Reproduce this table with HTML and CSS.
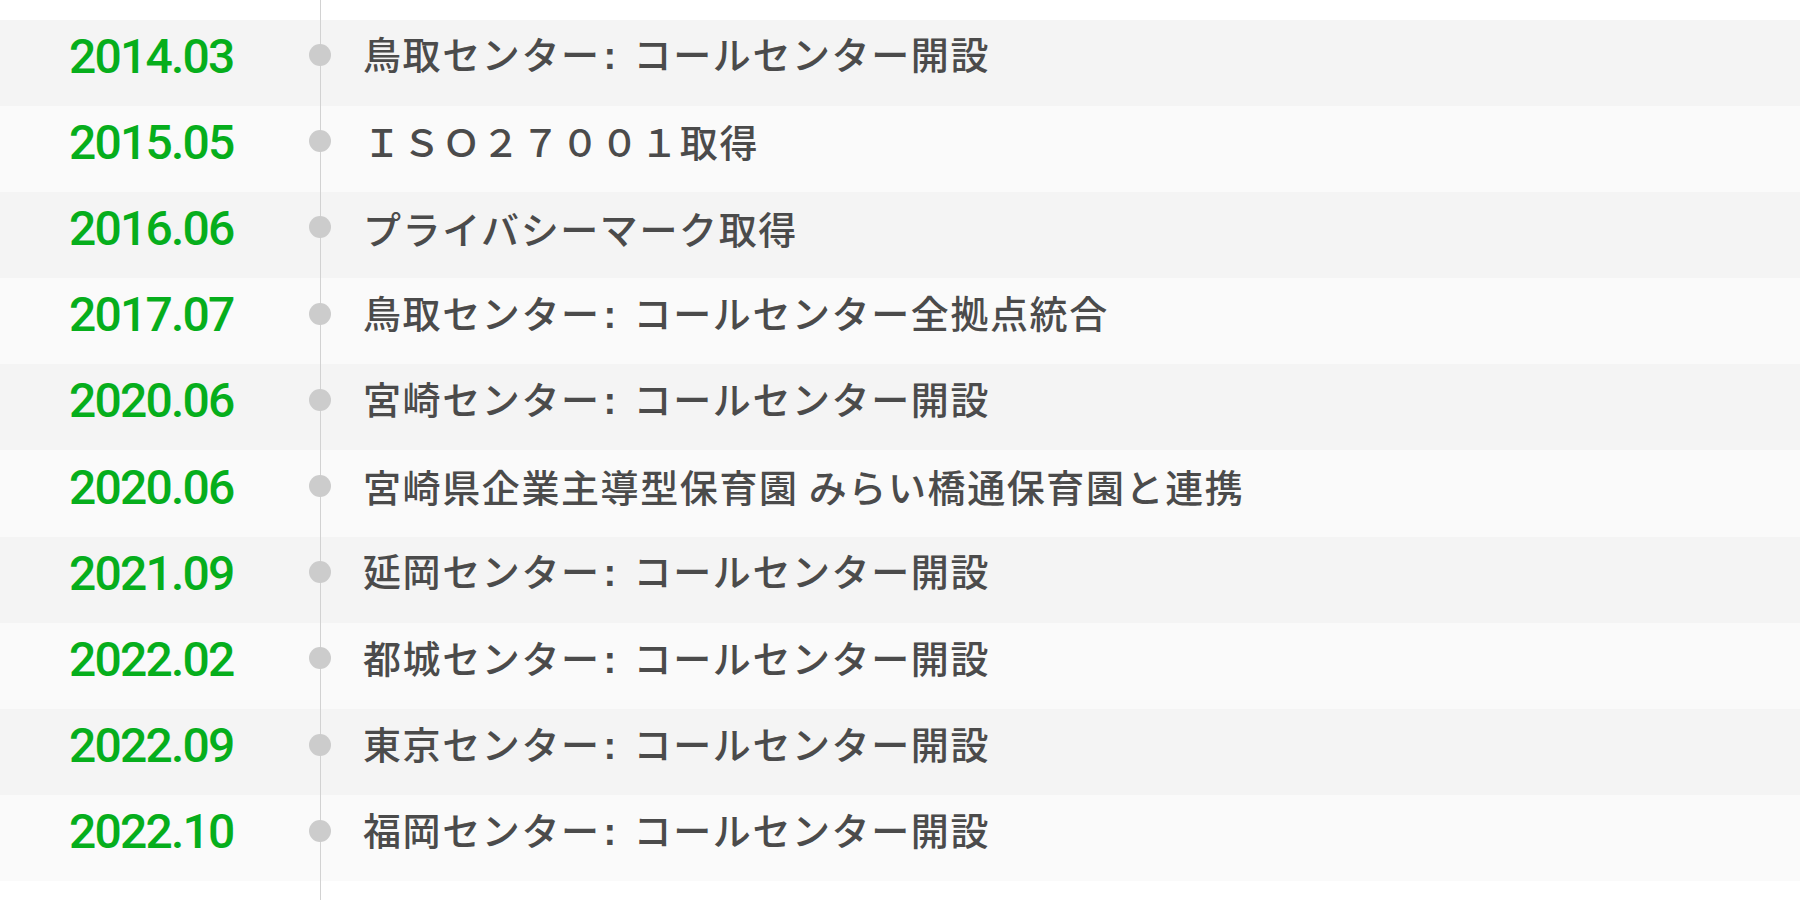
FILE: index.html
```html
<!DOCTYPE html>
<html lang="ja">
<head>
<meta charset="utf-8">
<title>沿革</title>
<link rel="stylesheet" href="styles.css">
</head>
<body>
<div class="timeline">
  <div class="row"><div class="date">2014.03</div><div class="dot"></div><div class="text">鳥取センター<span class="colon">:</span>コールセンター開設</div></div>
  <div class="row"><div class="date">2015.05</div><div class="dot"></div><div class="text">ＩＳＯ２７００１取得</div></div>
  <div class="row"><div class="date">2016.06</div><div class="dot"></div><div class="text">プライバシーマーク取得</div></div>
  <div class="row"><div class="date">2017.07</div><div class="dot"></div><div class="text">鳥取センター<span class="colon">:</span>コールセンター全拠点統合</div></div>
  <div class="row"><div class="date">2020.06</div><div class="dot"></div><div class="text">宮崎センター<span class="colon">:</span>コールセンター開設</div></div>
  <div class="row"><div class="date">2020.06</div><div class="dot"></div><div class="text">宮崎県企業主導型保育園 みらい橋通保育園と連携</div></div>
  <div class="row"><div class="date">2021.09</div><div class="dot"></div><div class="text">延岡センター<span class="colon">:</span>コールセンター開設</div></div>
  <div class="row"><div class="date">2022.02</div><div class="dot"></div><div class="text">都城センター<span class="colon">:</span>コールセンター開設</div></div>
  <div class="row"><div class="date">2022.09</div><div class="dot"></div><div class="text">東京センター<span class="colon">:</span>コールセンター開設</div></div>
  <div class="row"><div class="date">2022.10</div><div class="dot"></div><div class="text">福岡センター<span class="colon">:</span>コールセンター開設</div></div>
</div>
</body>
</html>
```
FILE: styles.css
```css
html, body {
  margin: 0;
  padding: 0;
  background: #ffffff;
}

.timeline {
  position: relative;
  min-height: 900px;
  box-sizing: border-box;
  padding: 19.5px 0 18px;
}

.timeline::before {
  content: "";
  position: absolute;
  left: 320px;
  top: 0;
  bottom: 0;
  width: 1px;
  background: #d2d2d2;
  z-index: 1;
}

.row {
  display: grid;
  grid-template-columns: 309px 22px 1fr;
  align-items: center;
  height: 86.2px;
  box-sizing: border-box;
  padding-bottom: 15px;
}

.row:nth-child(odd) {
  background: #f4f4f4;
}

.row:nth-child(even) {
  background: #fafafa;
}

.date {
  padding-left: 69px;
  padding-top: 3px;
  font-family: "Roboto", "Liberation Sans", sans-serif;
  font-size: 48px;
  font-weight: 500;
  line-height: 1;
  letter-spacing: -1.8px;
  color: #06ae1c;
}

.dot {
  width: 22px;
  height: 22px;
  border-radius: 50%;
  background: #cccccc;
  position: relative;
  z-index: 2;
}

.text {
  padding-left: 32px;
  font-family: "Noto Sans CJK JP", "Noto Sans", sans-serif;
  font-size: 38px;
  font-weight: 500;
  line-height: 1.2;
  letter-spacing: 1.6px;
  color: #4b4b4b;
  white-space: nowrap;
}

.colon {
  display: inline-block;
  width: 33px;
  padding-left: 3px;
  box-sizing: border-box;
  font-family: "Liberation Sans", sans-serif;
  font-weight: 700;
  letter-spacing: 0;
}
```
